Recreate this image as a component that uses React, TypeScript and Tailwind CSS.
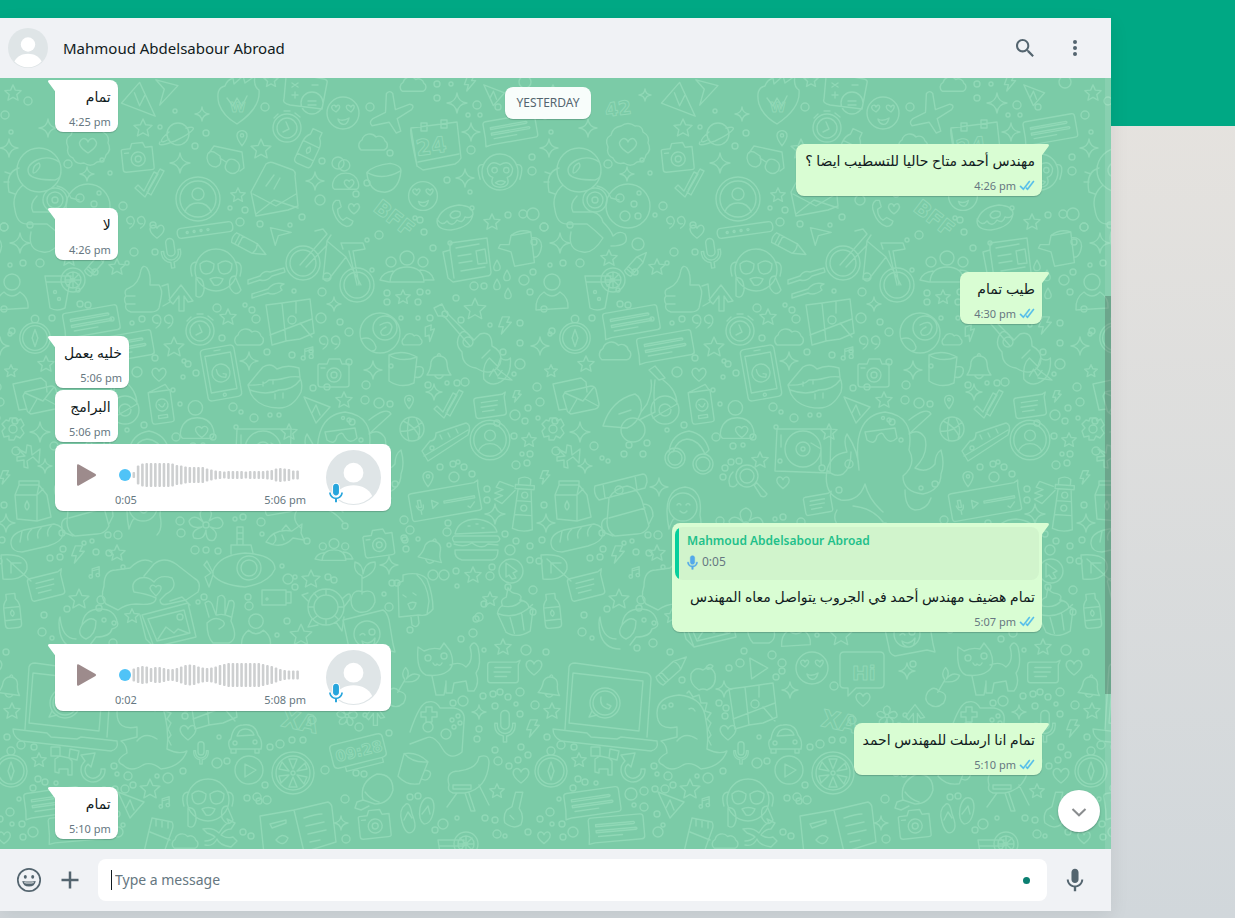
import React from "react";

/* ---------- wallpaper ---------- */

const c = (x: number, y: number, r: number) =>
  `M${x - r} ${y}a${r} ${r} 0 1 0 ${2 * r} 0a${r} ${r} 0 1 0 ${-2 * r} 0`;

const shapes: Record<string, string> = {
  star: "M0-9L2.6-3.2 9-2.6 4.2 1.8 5.6 8 0 4.8-5.6 8-4.2 1.8-9-2.6-2.6-3.2Z",
  spark: "M0-10Q1-1 10 0Q1 1 0 10Q-1 1-10 0Q-1-1 0-10Z",
  heart: "M0 7C-8 1-9-3-7-6C-4-9-1-7 0-4C1-7 5-9 7-6C9-3 8 1 0 7Z",
  bolt: "M-3-9L5-9 2-3 7-3-4 10-2 2-7 2Z",
  drop: "M0-6C3-1 4 1 4 3A4 4 0 0 1-4 3C-4 1-3-1 0-6Z",
  pin: "M0 11C-7 2-7-1-6-4A6.500 6.500 0 0 1 6-4C7-1 7 2 0 11Z" + c(0, -2, 2),
  cloud: "M-12 7A6 6 0 0 1-11-3A8 8 0 0 1 3-6A6 6 0 0 1 12-2A5 5 0 0 1 11 7Z",
  note: "M-4 5V-6L6-9V2M-4-3L6-6" + c(-6, 5, 2.5) + c(4, 3, 2.5),
  quotes: "M-8 8C-3 5-2 0-4-3A4 4 0 1 0-6 3M4 8C9 5 10 0 8-3A4 4 0 1 0 6 3",
  smile: c(0, 0, 16) + "M-10-3C-14-7-8-10-7-6C-5-10 0-7-7-1ZM5-3C1-7 5-10 8-6C10-10 14-7 8-1ZM-5 6Q0 9 6 5Q4 13-1 11Q-4 10-5 6Z",
  plane: "M-4-24Q0-28 3-24L6-6 22-12Q28-11 24-6L8 4 12 18 7 20-1 8-20 12Q-24 8-19 4L-5-3Z",
  planet: c(0, 0, 11) + "M-9 5C-18 11-20 7-9-2M8-6C20-9 18-3-3 7Q-22 14-18 8",
  watch: c(0, 0, 14) + c(0, 0, 10) + "M-1-6L2 1-4 4M-9-14L-13-10M8-15L13-11M-3-17H3",
  bottle: "M-5-12V-18H5V-12Q9-8 9-2V16Q9 20 5 20H-5Q-9 20-9 16V-2Q-9-8-5-12ZM-9-3H9M-9 11H9M0 0Q4 4 0 7Q-4 4 0 0",
  lace: "M-7-20Q0-25 7-20Q14-21 15-14Q22-10 20-3Q24 4 18 9Q17 16 9 16Q3 22-4 17Q-12 19-15 12Q-22 9-20 1Q-24-7-17-11Q-15-19-7-20ZM0 7C-9 1-10-3-7-6C-4-9-1-7 0-4C1-7 5-9 7-6C10-3 9 1 0 7Z",
  camera: "M-15-9H-7L-5-14H6L8-9H15V12Q15 14 12 14H-13Q-16 14-16 11V-8Z" + c(0, 2, 7) + c(0, 2, 3) + "M-13-5H-9",
  glasses: "M-19-2Q-19-10-12-8L-6-4Q-3 5-10 7Q-18 7-19-2M0 4Q2-3 9 0Q16 4 12 11Q7 16 1 11Q-2 8 0 4M-6-2L0 2M-17-7L-12-14 16-8 18 8 14 11",
  envelope: "M-27 2L-12-26Q-8-29-4-27L15-20Q18-18 17-14L20 16 10 20-22 26ZM-25 4L-2 16 18 4M-22 24L-4 10 20 18M-12-4L-4-15M-4-1L2-12",
  letters: "M-20-14L8-20 13-16 14-6M-20-14L-14 12-6 11M-8-6L18-12Q22-12 23-8L26 6Q26 10 22 11L-2 16Q-6 14-6 12L-10-2ZM-8-5L10 3 21-11M-4 15L4 1M25 8L12 1",
  avatar: c(0, 0, 22) + c(0, 0, 18) + c(0, -5, 6) + "M-13 13Q-10 4 0 4Q10 4 13 13",
  ticks: "M-17 2L-14-1-8 5 2-14 6-12-7 11ZM-4 4L8-17 12-15-1 9-5 6",
  helmet: c(0, 0, 22) + "M20-8Q10-15-2-10Q-14-4-10 4Q-6 10 16 10 22 8 22 2M-6 2Q-6-5 0-7Q3-4-3 2Q-6 4-6 2M-16 15Q-28 25-24 40Q-22 54-12 54H8Q16 60 24 68Q14 84 4 82Q-12 80-8 62M18 16Q28 18 32 28L40 30M-2 26Q-10 34-6 42H14Q22 44 24 52Q32 60 34 66Q40 60 46 64Q52 76 32 76M-20-2Q-34 2-30 22L-24 24M-28 4L-34 2M-30 12L-35 12" + c(16, 30, 12) + c(16, 30, 8) + c(16, 30, 3),
  moon: c(0, 0, 22) + c(-8, -8, 4) + c(6, -2, 3) + c(-3, 10, 5) + c(10, 10, 3) + c(11, -13, 2),
  bar: "M-24-5H24Q28-5 28 0T24 5H-24Q-28 5-28 0T-24-5Z" + c(-18, 0, 1) + c(-11, 0, 1) + c(-4, 0, 1) + c(3, 0, 1),
  mic: "M-5-12A5 5 0 0 1 5-12V0A5 5 0 0 1-5 0ZM-9-2V1A9 9 0 0 0 9 1V-2H12V1A12 12 0 0 1 2 13V20H-2V13A12 12 0 0 1-12 1V-2Z",
  crayon: "M-20-6H6L20 0 6 6H-20Q-23 0-20-6ZM6-6Q9 0 6 6M-12-6V6M-16-6V6",
  paper: "M-12-8L14-2-2 2-6 14ZM-2 2L14-2",
  phone: "M-8-14Q-14-10-10 0Q-6 12 4 15Q10 15 11 9L4 5 0 8Q-6 4-6-4L-2-7-4-14Z",
  bike: c(0, 0, 17) + c(0, 0, 13) + c(54, 22, 17) + c(54, 22, 13) + "M-3 2L24-29 20-34 12-32M28-28L24-22 43-6 58 22M24-22L20 16H26L43-6M3 4L24-18M40-14L38-20H60L62-14 50-12 56 22M46-12L54 22" + c(24, 14, 4),
  calendar: "M-24-20L22-26 26 10Q24 14 20 16L-12 22-18 18ZM-24-20Q-26-18-18 18M-17 14L24 6M-14-25V-17H-8V-25ZM6-28V-20H12V-28Z",
  monkey: c(0, 0, 20) + "M-18-8Q-28-10-22 8M18-8Q28-10 22 8M-14-4Q-10-14 0-8Q10-14 14-4Q14 4 8 6Q12 16 0 17Q-12 16-8 6Q-14 4-14-4M-5 12Q0 8 6 11Q2 17-5 12" + c(-6, -2, 3) + c(7, -2, 3),
  donut: "M-18 4Q-14-10 4-12Q18-11 18-3Q16 10-4 13Q-18 13-18 4M-18 2Q-13 10-8 4Q-3 11 2 3Q8 7 10 0Q16 2 18-3M-5-2Q-2-8 5-5Q7 0 0 1Q-4 2-5-2",
  news: "M-17-17L20-22 24 12Q24 16 20 16L-14 22-19 18-24-8-17-10ZM-17-10L-13 18M-11-12L12-16M-9-4L4-6M-8 3L5 1M-6 11L18 7M9-9L18-11 20 3 11 4Z",
  can: "M-10-16L12-20 16 14-6 18-10 2-24-2-22-6-12-6ZM13-14Q24-14 24-4 22 8 16 8M-10-16Q0-24 12-20",
  people: c(0, -12, 7) + c(16, -8, 5) + c(-16, -8, 5) + "M-17 12Q-16-3 0-3T17 12ZM-14 1Q-24 2-27 10L-18 12M13 0Q24 0 27 10L18 10",
  user: c(0, -12, 8) + "M-16 16Q-17 4-8-2Q0 6 8-2Q17 4 16 14Z",
  chat: "M-27-10Q-27-13-24-13H25Q28-13 28-10V9Q28 12 25 12H-22L-28 13-27 4ZM-20-6H18Q20-5 18-4H-20ZM-20 0H20Q22 1 20 2H-20ZM-18 6H6",
  drink: "M-14-12H12L6 20Q-2 24-9 20ZM-13-6H11" + c(14, -8, 12) + c(14, -8, 8) + "M14-16V0M6-8H22M8-14L20-2M20-14L8-2" + c(-4, 4, 1.5) + c(0, 11, 1.5),
  thumb: "M-14-2Q-4-6-2-20Q0-26 4-22Q8-16 7-5H16Q20 0 18 8L16 18Q14 22 8 22H-12Q-19 20-17 14Q-20 9-17 6Q-20 0-14-2ZM-16 6H-8M-16 14H-8M19-4L25-6 27 12 20 16",
  hush: c(0, 0, 21) + "M-19-8Q-28-8-24 6M19-8Q28-8 24 6M-16-6Q-10-12-2-6Q-2 4-10 4Q-16 4-16-6M2-6Q10-12 16-6Q16 4 8 4Q2 4 2-6M-6 9Q0 6 7 9Q4 17-2 15ZM-20 8Q-12 6-12 20Q-14 30-20 26ZM19 6Q12 6 14 18Q20 28 25 20Z",
  uparrow: "M0-13L12 3 7 4 3-2V13H-2V-2L-8 6-12 2Z",
  wrench: "M-18 4L-6 0Q-2-6 4-4L18-8 19-4 6 0Q0 6-6 4L-18 8ZM-14 18L2 13Q8 5 18 8Q12 10 16 14Q8 20 2 17L-14 22Z",
  guitar: "M-34-34L-26-38-22-30 6-2 12-8Q24-12 24 4Q36 10 32 22Q24 36 8 26Q-6 24-6 10Q-14 2-8-8Q-4-14 2-6M-34-34L-30-26-24-26 2 4" + c(0, 0, 5) + "M14 16L22 8M28 26L44 38 30 36",
  compass: c(0, 0, 16) + c(0, 0, 13) + c(0, -20, 4) + "M0-9L3 0 0 9-3 0Z",
  map: "M-24-16L-8-18 6-20 20-22 24 12 10 18-4 20-18 24ZM-8-18L-4 20M6-20V-8M-20 14L22-2M10 2L22 16" + c(2, -1, 4),
  flower: c(0, 0, 20) + c(5, -5, 12) + "M0-8Q10-14 12-6Q10 4 2 2Q-2-2 6-6M-19 6Q-8 2-4 14Q-4 18-8 18",
  tablet: "M-13-26H13Q17-26 17-22V22Q17 26 13 26H-13Q-17 26-17 22V-22Q-17-26-13-26ZM-13-19H13V18H-13ZM-3-23H3" + c(0, 0, 9) + c(0, 22, 1.5) + "M-4-4Q-4 4 4 5L5 2 2 1",
  lips: "M-27 3Q-18-8-12-15Q-4-20 2-13Q12-18 24-14L25-4Q28 2 26 10Q18 26 4 26Q-16 26-24 12L-27 3Q-12 4-6-2Q4-2 10-4Q18-6 25-5M-25 8Q-8 14 4 8Q18 8 25-2M-12 0V4M-2-2V2M8 11V16M0 12V17",
  cup: "M-14-14Q0-20 14-12L11 14Q-2 20-14 12ZM-14-14Q-2-6 14-12M13-2Q22-4 20 4Q18 10 12 8",
  bell: "M-12 9Q-8 3-8-4Q-6-10 0-10Q7-10 8-3Q8 4 12 9ZM-4 10Q0 15 4 10M-2-10Q0-15 2-10",
  passport: "M-12-14L10-14V16Q10 18 7 18H-9Q-12 18-12 15ZM-12-14L6-20 9-14M-5 10H4V13H-5Z" + c(0, 0, 6) + "M-3-1Q0 5 3-1",
  love: c(-4, -18, 8) + "M-18 16Q-22 14-20 6Q-16-7-2-7T16 6Q18 14 14 16ZM3 15C-4 10-5 6-3 4C-1 2 2 3 3 5C4 2 8 2 9 4C11 6 10 10 3 15Z",
  record: "M-26-20L28-20 27 24-28 22Z" + c(0, 0, 18) + c(0, 0, 7) + c(0, 0, 2) + "M8-6L18 0V16" + c(19, 19, 3) + c(-23, 12, 2) + "M-22-14V-2",
  cone: "M-14-14L12-4-2 12ZM-6 2L-2-6 2 4",
  octopus: "M-26 30Q-34-24 0-28Q30-24 24 10Q32 24 18 36Q18 52 38 54Q56 50 56 34Q60 24 56 10Q50 14 50 24Q42 34 30 28Q44 14 40-2Q34-12 24-6L46-26Q42-34 24-20M-26 30Q-26 12-38-6Q-42 0-38 12Q-54 14-58 30Q-62 54-44 60Q-26 62-20 44Q-16 60-2 72M-58 30Q-50 38-42 34Q-34 28-34 12M-20-8L10-12 12-2Q4 6-2-6Q-4-8-8-4Q-10 6-18 0ZM-32 66Q-12 68-2 82M20 50Q20 68 30 70Q42 70 46 58M-48 70Q-54 80-44 88" + c(4, -20, 2) + c(-2, -22, 1.5) + c(16, 0, 2) + c(-46, 50, 3) + c(50, 44, 3) + c(36, 48, 2) + c(-36, 24, 4),
  ball: c(0, 0, 12) + "M-9-8Q2-4 8 9M-12 2Q0 4 10-7M-3-11Q-6 2-3 12M4-11Q10 0 6 10",
  shoe: "M-24 8L-16-2Q-10-2-10-10L20-20Q26-18 22-8L-18 18ZM-22 13L22-13M-6-8L-4-4M2-10L4-6M10-14L12-10",
  gear: c(0, 0, 4) + "M-3-11H3L4-8 8-10 11-4 8-1 11 4 7 9 3 7 1 11H-4L-4 7-9 8-11 2-8-1-11-5-7-9-4-8Z",
  scooter: c(14, 26, 12) + c(46, 6, 14) + c(46, 6, 6) + "M-16 22Q-8-4 16-10Q24-6 22 8Q18 20 8 24L-16 22ZM20 16L36 8Q34-10 36-24M30-34L36-38 46-26 40-24ZM44-24Q58-14 58 0L34 14M22 8L28 0Q34-14 32-24M0 10L12 6",
  arrows: "M-11-8L-3-4-2-12 2-11 3-2 11-8 10 6 4 0-2 4-1 11-5 10-5 3-12 4-12 0-4-1Z",
  headset: "M-20 4Q-18-14 0-17Q16-14 20 2L16 6Q10-8-2-9Q-12-8-16 4" + c(-14, 10, 10) + c(-14, 10, 7) + c(14, 16, 10) + c(14, 16, 7),
  voice: "M-35-12Q-35-14-32-14H32L36-16 35-10V12Q35 14 32 14H-32Q-35 14-35 11ZM-13-4L-7 0-13 4ZM-1-1H30V1H-1ZM-27-6V1H-24V-6ZM-29-1Q-28 4-25 4T-22-1M-25 4V8M22 8L24 10 29 5",
  lighthouse: "M-8 24L-5-16H8L12 24Q2 28-8 24ZM-8-16H11V-20H-8ZM-5-20V-26Q2-30 7-26V-20M-6-4H9M-7 10H10M-10-18L-24-22-27-16-20-14-28-10-20-8-28-4-20 0-8-14" + c(2, -10, 3) + c(2, 3, 3),
  milk: "M-18-6L-14-16V-20H6V-16L-14-16M6-16L14-6 18 16 4 20-16 18-18-6H4L6-16M4-6V20M4-6L10-12M-6 0Q-2 6-6 9Q-10 6-6 0",
  pack: "M-16-2Q-10-12 2-14Q14-12 18 4L24 26Q20 34 12 34L-10 36Q-18 32-18 22ZM-30-14L18-26Q22-26 22-18L20-12-26 0Q-32-6-30-14ZM-22-16L-20-2M10-24L12-10M-16 18L20 8M18 4Q28 4 28 16L24 24M-18 18Q-26 20-22 32L-12 36" + c(-6, -10, 4),
  lens: c(4, -2, 11) + c(4, -2, 7) + "M11 7L14 5 24 16Q22 20 18 18ZM-10-6Q-16 0-13 8Q-8 10-6 6" + c(-18, -10, 3) + c(-12, -16, 3) + c(-4, -17, 3) + c(-20, -1, 3),
  girl: c(0, 0, 14) + "M-14 22Q-22-18 2-20Q20-18 17 8Q20 22 14 28M-6-2Q-4-5-2-2M3-2Q5-5 7-2M-3 4Q1 8 4 4M-14 22Q-10 10-8 12",
  burger: "M-21-6Q-18-20 0-21Q18-19 21-8ZM-22-4H22Q26 0 21 2H-22Q-25-2-22-4ZM-22 4Q-12 8-4 3Q6 10 12 4L22 5M-21 10H22Q22 19 16 20H-14Q-22 18-21 10M-8-14H-6M0-16H2M6-12H8",
  bread: "M-25 6Q-26-4-12-8L18-14Q28-12 27-4Q26 4 12 8L-14 14Q-24 14-25 6M-16 4L-14-7M-8 2Q-10-4-4-9M2 0Q0-6 6-11M12-2Q10-8 16-13",
  cursor: c(0, 0, 12) + "M-5-8L6 0 2 2 5 7 1 8-2 4-5 6Z",
  leaf: "M-14-12Q14-14 12 2Q8 14-12 12ZM-8-8L16 14M-4 6V-4L6-4",
  msg: "M-17-8Q-17-11-14-11H15L19-13 17-8V9Q17 12 14 12H-14Q-17 12-17 9ZM-9-5H9M-10 0H8M-9 5H4",
  ice: "M-17-14L-12-16-12-22Q4-26 12-18Q18-2 18 12Q12 20 4 18L-16 20ZM2-22Q12-14 14 4L12 17M-4 20L-3 28Q2 32 4 26L3 18M-12-2L-9 0M-2-4L1-2M-7 7Q-3 4 1 6Q-1 14-5 12Z",
  cupcake: "M-18 2Q-16-4-12-5Q-14-12-7-13L-4-22Q-2-16 4-15Q10-12 6-8Q14-6 14 0L18 2 12 24Q-2 30-12 22ZM-18 2Q0 12 18-2M-13-5Q0 0 8-8M-6 8L-4 24M6 6V22",
  dog: "M-18 0Q-16-16 0-16Q14-16 17-4Q20 2 12 4Q10 12-4 12L-10 20M-18 0Q-24 10-14 14Q-4 10-4-4Q-10-10-18 0M-24 14Q-38 14-40-8Q-42-4-40 8Q-36 24-20 24" + c(4, -5, 2) + c(14, -2, 2),
  hands: "M-46 22Q-52 16-48 4Q-48-12-36-12L-22-14Q-10-26 0-20M-34 28Q-26 22-16 22Q4 24 4 16Q-4 12-18 10Q-22 0-12-4Q-4-6 2 0Q8-8 20-4Q26 6 14 12L8 18Q8 24 16 22L34 18 46 10Q50 0 42-4L24-18Q12-26 2-18L-8-6M4 14C-2 8-3 6-1 4C1 2 3 4 4 5C5 3 8 3 9 5C10 8 6 12 4 14ZM-46 22L-34 28",
  sub: "M-32 4Q-26-12 0-14Q30-12 30 2Q24 16 0 20Q-24 18-32 8ZM-14-13V-22H6L8-14M-8-22V-40H-2V-22M-32 6L-38-6-41-2-34 6-40 10-36 20-32 8M-8-34H-2M-8-28H-2" + c(4, 1, 12) + c(4, 1, 8),
  blossom: c(0, 0, 3) + "M-3-3Q-10-14 0-17Q9-14 3-4Q14-12 17-2Q16 6 4 2Q14 8 8 15Q0 18 0 5Q-2 16-12 13Q-16 6-4 2Q-16 4-17-4Q-12-12-3-3",
  fish: "M-18 6Q-10-8 8-5L18-12 17-3 20 4 9 2Q-2 14-18 6M-10-2Q-6 4-11 8M-2-1L0 4M-2-6L2-11 6-6",
  turtle: c(0, 0, 18) + c(0, 0, 12) + "M16-8Q26-18 24-8L18 0M-18-6L-24-12-18-14M-14 12L-18 20-8 18M10 15L16 24 18 10M0-12V-18M12 0H18M0 12V18M-12 0H-18M-8-9L-12-14M9 9L13 13M-9 9L-13 12",
  plant: "M-12 10Q-10-2 0 2Q12-2 12 12Q8 24-4 22Q-12 20-12 10ZM-1 4V-14Q-10-18-8-28Q0-26 0-16Q2-28 12-28Q14-18 0-12",
  usb: "M-14-7H10V8H-14ZM10-5H15V6H10" + c(-9, 2, 1),
  vhand: "M-12-2L-16-16Q-12-20-9-15L-5-4-3-22Q2-26 4-20V-4L8-18Q14-20 13-13L10 2Q18 20 8 24H-8Q-14 18-14 4M-14 4Q-6-4 2 2Q6 6-2 10M-4-4Q2-6 10-2",
  photo: "M-28-10L18-22 26 12-16 22ZM-22-6L14-15 20 8-13 16ZM-30-10L-24 14-16 22M0-24L12-28 20-20M-12 14L-4 2 4 8 8 4 18 8" + c(10, -8, 3),
  bubble: "M-26-18L14-28Q18-26 20-18L24 6 26 14 18 12-14 18Q-20 16-20 10Z" + c(-2, -4, 13) + "M-9-3Q-6-6-4-3M-7 3Q0 8 6 0Q6 10-1 9Q-6 8-7 3" + c(3, -6, 3),
  cat: "M-22-22L-16-18Q-8-22 0-20L4-26 10-18Q16-4 8 2Q0 8-14 6Q-24 2-22-22ZM10-4Q20-8 26-2Q34-8 30-22Q34-30 38-22Q42-4 36 4Q40 14 34 22H28L26 12 14 14 12 24H6V12M-8 7L-4 26H4L6 14M-7-6Q-5-2-3-5Q0-2 2-6" + c(-12, -11, 3) + c(4, -13, 3),
  laptop: "M-36-42Q-35-46-30-46L42-36Q46-34 46-30L42 28M-36-42L-40 20M-32-36L38-28 34 22-36 14ZM-52 20L-18 24-14 28 12 30 16 28 52 32Q54 40 46 42L-44 32Q-52 28-52 20Z" + c(0, -6, 15) + c(0, -6, 12) + "M-13 2L-16 8-8 6M-4-12Q-6-2 4 0L6-3 2-5",
  dino: "M-34-14Q-34-30-12-32Q10-30 14-12Q18 6 16 22Q28 28 36 24Q30 40 10 42Q0 34-8 38Q-20 46-28 38Q-38 34-24 26Q-24 18-30 14L-14 10-14 0Q-34 4-34-14M-4-34L-2-36 2-30 8-32 10-24 16-24 14-16 20-14 16-8 20-4 17 2 20 8 17 12 20 18M-14 14Q-6 4 6 12M-2-18Q2-20 4-16" + c(-27, -20, 2) + c(-20, -22, 2),
  apple: "M0-8Q8-14 12-4Q14 8 4 12Q0 10-4 12Q-14 6-12-4Q-8-12 0-8ZM2-9Q6-16 10-12Q8-8 4-9",
  car: "M-14 2Q-12-12-2-12Q10-14 13-2Q18 4 16 12H-15Q-18 4-14 2ZM-8-1Q-6-8 0-8Q7-8 9-2ZM-14 12V16H-9V12M10 12V16H14V12" + c(-10, 6, 2) + c(10, 5, 2),
  play: c(0, 0, 14) + "M-4-6L7 0-4 7Z",
  tri: "M-8-11L12 0-6 12Z",
  slice: c(0, 0, 21) + c(0, 0, 17) + c(0, 0, 2) + "M0-4L-4-14H4ZM4-2L12-10 14-4ZM4 2L14 4 11 11ZM0 4L4 14H-4ZM-4 2L-12 10-14 3ZM-4-2L-14-4-11-11Z",
  clock: "M-27-8Q-27-12-23-12H22Q27-12 27-8V8Q27 12 22 12H-22Q-27 12-27 8ZM-16 13V17H22V13",
  pad: "M-30 10Q-20-20-12-20Q-4-22 0-14H14Q26-12 24 0L22 30Q10 40 2 26Q-6 12-14 16L-30 22" + c(12, -2, 2) + c(18, -6, 2) + c(14, 5, 2) + c(20, 1, 2) + c(-12, 5, 5) + c(6, 12, 5) + "M-14-10V-15H-8V-10H-3V-5H-8V0H-14V-5H-19V-10Z",
  grill: "M-20 4Q-24-10-10-10Q8-12 10-24Q20-28 20-18Q18 8-4 12H-16Q-22 10-20 4ZM-12 12L-22 26M-4 12L2 30H6L0 12M10 4L20 24M-16 4H2V8H-16Z",
  ukulele: "M0-6L4-22H12L8-4Q14 4 10 14Q2 20-8 12Q-10 4-6-2ZM-2 4L2 8",
  blocks: "M-14-14H-5V-5H-14ZM5-12L14-10 12-1 4-3ZM-5-5L4-3 7 0 7 14 3 14V8H-6V12L-10 11V-2Z",
  redo: "M-8-8A12 12 0 1 0 12 0L8 0A8 8 0 1 1-5-5L-2-2 2-16-12-14Z",
  shuffle: "M-16-4Q-6-6 0 0Q6-10 10-10L8-14 16-10 12-4Q6-4 2 2Q8 6 14 4L18 8 12 14Q0 12-2 6Q-6 14-14 12M-16-4L-12 0Q-6 2-4 4Q-8 8-14 8",
  tube: "M-8-16L12-12Q14-8 12-4L2 24-16 18ZM-10-2L10 6M-4-14V-8M2-13V-7M8-12V-6",
  book: "M-38-10L-4-16 30-24Q34-22 34-18L38 16 6 26-34 28ZM-4-16L6 26M-28-2L-12-6V-3L-26 2ZM-22 14Q-16 6-10 12Q-14 22-22 14M6-8Q18-12 24-12M8 0L26-4M10 8L28 4M12 16L22 14",
  bulb: "M-10 12Q-14-6 4-14Q20-14 20 2Q16 16 2 16ZM-10 12L-16 14-18 20-12 22-4 18M-8 4Q-2 12 6 14",
  flops: "M-12-14Q-20-8-16 4Q-12 18-6 14Q0 10-6-4Q-8-16-12-14M-14 2L-10-6-6 0M8-20Q16-22 16-10Q14 6 6 6Q0 2 2-10Q4-18 8-20M4-4L10-12 12-4",
  bat: "M-16 10Q-18-12-8-20L4-8 8-20Q16-14 22-20Q24 8 4 16Q-8 20-16 10M-8 6L-2-4 4 6 10-2",
  flame: "M-18 4Q-22-12-12-14Q-10-20-4-22L-3-16 6-24 8-17 18-24Q16-14 22-10Q24 8 0 24Q-14 16-18 4M-10-2L-4 6 0-2 5 6 10-4",
  bowl: "M-18-4Q-10-12 8-14Q20-12 20-6Q18 16 2 18Q-16 18-18-4ZM-18-4Q0 6 20-6",
  calc: "M-22-18Q-22-22-18-22L16-16Q20-15 19-12L14 14-18 10Q-26 8-24 4ZM-16-12L-10-8M-10-12L-16-8M4-10H10M-16 0H-10M-13-3V3M0 6H8M0 10H8" + c(4, 8, 11),
  speech: "M-22-16Q-22-20-18-20H18Q22-20 22-16V12Q22 16 18 16H-6L-14 24-14 16H-18Q-22 16-22 12Z",
};

type Item = [string, number, number, number?, number?];

const items: Item[] = [
  ["cone", 137, 98, 1.3, 180], ["paper", 165, 92, 1, 120], ["flame", 237, 100], ["calc", 308, 95], ["smile", 343, 113],
  ["plane", 390, 115, 0.9], ["planet", 178, 134], ["watch", 287, 128], ["bottle", 310, 147, 1, 25], ["lace", 88, 146],
  ["camera", 138, 157, 1, -6], ["pin", 242, 137, 0.8], ["glasses", 226, 160], ["envelope", 278, 190], ["cloud", 373, 143],
  ["bowl", 383, 176, 0.9], ["avatar", 198, 199], ["ticks", 152, 186], ["helmet", 39, 170], ["moon", 88, 206], ["bar", 205, 230, 1, -8],
  ["mic", 171, 252, 0.8, -8], ["crayon", 250, 246, 0.9, 28], ["paper", 280, 234, 0.8], ["phone", 343, 213, 0.9], ["heart", 354, 209, 0.7],
  ["love", 347, 178, 0.7], ["bike", 303, 263], ["calendar", 435, 148], ["monkey", 500, 172, 0.9], ["smile", 423, 196, 0.9],
  ["donut", 455, 217], ["news", 467, 260], ["can", 520, 250, 0.9], ["people", 407, 270], ["chat", 510, 130, 0.95, -10],
  ["user", 12, 294], ["drink", 59, 288], ["thumb", 143, 290], ["hush", 216, 270], ["uparrow", 181, 298], ["wrench", 266, 276],
  ["guitar", 468, 342], ["bolt", 505, 325, 0.9], ["bolt", 430, 333, 0.8, -20], ["chat", 91, 322, 1, -10], ["chat", 125, 347, 1, -10],
  ["compass", 35, 338, 0.95], ["watch", 200, 331], ["quotes", 164, 320], ["quotes", 331, 341], ["map", 290, 321], ["flower", 380, 333],
  ["cloud", 249, 338], ["tablet", 221, 373, 1, -10], ["lips", 275, 382], ["camera", 334, 373], ["cup", 403, 369], ["bell", 439, 366],
  ["note", 308, 354, 0.8], ["crayon", 97, 263, 0.7, -48], ["quotes", 137, 221, 0.9], ["drop", 497, 265, 0.8], ["drop", 507, 275, 0.8],
  ["drop", 497, 284, 0.8], ["drop", 508, 293, 0.8], ["cloud", 75, 352, 1.1], ["cloud", 412, 340, 0.7],
  ["passport", 162, 405, 1, -8], ["love", 199, 424, 0.9], ["record", 263, 449], ["cone", 318, 411], ["octopus", 345, 440],
  ["ball", 412, 429], ["shoe", 446, 443], ["avatar", 490, 440, 0.9], ["msg", 490, 406, 0.9, -8], ["ticks", 451, 407], ["pin", 409, 401, 0.7],
  ["letters", 33, 398], ["gear", 13, 429], ["scooter", 79, 404], ["arrows", 29, 457], ["headset", 149, 448],
  ["voice", 445, 502, 1, -10], ["lighthouse", 522, 505, 1, 4], ["milk", 33, 501], ["pack", 85, 500], ["lens", 203, 478],
  ["msg", 278, 504, 0.8, -10], ["girl", 143, 507], ["burger", 476, 540], ["bread", 36, 538], ["bell", 432, 551, 1, 14], ["cursor", 511, 571],
  ["leaf", 15, 567], ["msg", 46, 586, 1, -14], ["ice", 415, 597], ["cupcake", 515, 609, 1, -8], ["bottle", 12, 610, 0.9, -6],
  ["dog", 100, 625], ["hands", 152, 582], ["sub", 245, 567], ["blossom", 206, 525], ["fish", 284, 536], ["people", 334, 552, 0.7],
  ["camera", 379, 543, 0.95, -8], ["turtle", 326, 607], ["plant", 363, 590], ["usb", 276, 597], ["vhand", 221, 619], ["photo", 170, 625],
  ["user", 256, 632, 0.9], ["bubble", 369, 638], ["cat", 440, 669], ["msg", 503, 672, 0.9], ["laptop", 65, 709], ["dino", 151, 727],
  ["crayon", 133, 669, 0.9, -42], ["apple", 163, 678], ["tri", 217, 668, 0.9], ["smile", 272, 668], ["speech", 322, 672],
  ["map", 213, 705], ["car", 245, 737], ["play", 249, 770], ["slice", 293, 773], ["clock", 358, 751, 1, -14],
  ["mic", 505, 725, 0.85], ["pad", 440, 722], ["cup", 413, 769, 0.9, 15], ["grill", 469, 781], ["ukulele", 512, 812, 0.9],
  ["compass", 11, 771], ["blocks", 65, 761], ["redo", 93, 769], ["chat", 52, 803, 1, -8], ["chat", 76, 829, 1, -5],
  ["hush", 208, 800], ["shuffle", 219, 833], ["tube", 160, 834], ["book", 298, 826], ["bulb", 373, 788], ["camera", 375, 824, 1, -6],
  ["flops", 418, 818], ["drink", 452, 852], ["cone", 132, 806], ["mic", 201, 752, 0.6], ["bat", 495, 372, 0.7],
  ["bell", 10, 686, 0.9, 8], ["plant", 400, 690, 0.8, 30], ["note", 95, 573, 0.7], ["note", 165, 803, 0.7], ["bolt", 78, 554, 0.9],
  ["bolt", 533, 728, 0.9], ["bolt", 545, 477, 0.7], ["bolt", 517, 396, 0.6], ["pin", 428, 478, 0.8],
  ["cloud", 185, 842, 0.9], ["cloud", 413, 85, 0.9], ["bolt", 470, 83, 0.8], ["cone", 495, 96, 0.8],
  ["heart", 157, 232, 0.9], ["heart", 159, 375, 0.9], ["heart", 243, 483, 0.8], ["heart", 188, 733, 1], ["heart", 534, 668, 1],
  ["heart", 521, 776, 1], ["heart", 4, 838, 0.8], ["heart", 323, 700, 0.9], ["uparrow", 375, 715, 0.8], ["blossom", 347, 716, 0.6],
  ["star", 13, 93, 0.9], ["star", 143, 128, 1], ["star", 261, 149, 1.1], ["star", 238, 195, 0.8], ["star", 271, 80, 0.8],
  ["star", 492, 222, 0.9], ["star", 69, 258, 0.9], ["star", 117, 267, 0.9], ["star", 475, 309, 1.2], ["star", 228, 317, 0.9],
  ["star", 174, 347, 1.1], ["star", 344, 400, 0.9], ["star", 403, 297, 0.8], ["star", 289, 432, 0.9], ["star", 529, 440, 0.8],
  ["star", 220, 460, 0.9], ["star", 117, 553, 0.9], ["star", 79, 599, 1.1], ["star", 132, 616, 0.8], ["star", 311, 579, 1],
  ["star", 301, 635, 1.2], ["star", 473, 575, 0.9], ["star", 490, 599, 0.8], ["star", 503, 647, 0.9], ["star", 12, 711, 0.9],
  ["star", 39, 760, 0.8], ["star", 150, 789, 1.1], ["star", 497, 791, 0.8], ["star", 551, 371, 0.7], ["star", 46, 364, 0.9],
  ["spark", 48, 128, 0.9], ["spark", 9, 148, 0.9], ["spark", 202, 114, 0.7], ["spark", 180, 163, 1], ["spark", 87, 174, 0.7],
  ["spark", 315, 181, 0.9], ["spark", 20, 243, 1], ["spark", 457, 103, 1], ["spark", 471, 132, 0.9], ["spark", 465, 178, 0.9],
  ["spark", 105, 95, 0.6], ["spark", 334, 304, 0.7], ["spark", 249, 361, 0.9], ["spark", 373, 370, 0.9], ["spark", 434, 392, 0.8],
  ["spark", 40, 432, 1], ["spark", 45, 466, 0.7], ["spark", 119, 487, 0.9], ["spark", 6, 523, 0.9], ["spark", 495, 514, 1],
  ["spark", 389, 565, 0.9], ["spark", 540, 346, 0.9], ["spark", 184, 689, 0.8], ["spark", 250, 690, 0.8], ["spark", 367, 671, 0.8],
  ["spark", 479, 712, 0.7], ["spark", 341, 823, 0.7],
];

const dots: number[][] = [
  [28, 101, 4], [5, 115, 4], [68, 164, 4], [195, 146, 3], [206, 133, 3], [265, 107, 4], [370, 107, 4], [390, 153, 3], [338, 163, 6],
  [322, 161, 3], [320, 200, 5], [356, 194, 3], [367, 183, 3], [153, 225, 3], [240, 222, 4], [260, 224, 3], [134, 252, 4], [155, 252, 3],
  [123, 206, 4], [115, 215, 2], [175, 111, 2], [160, 127, 2], [102, 160, 2], [110, 173, 2], [230, 208, 2], [245, 210, 3], [379, 235, 4],
  [367, 240, 2], [302, 217, 3], [290, 225, 2], [4, 227, 4], [30, 225, 3], [437, 84, 3], [451, 84, 2], [477, 105, 4], [437, 98, 3],
  [468, 115, 2], [480, 115, 2], [498, 107, 3], [525, 82, 6], [551, 132, 2], [471, 150, 4], [532, 157, 3], [532, 171, 4], [447, 180, 3],
  [470, 192, 2], [472, 208, 2], [523, 214, 4], [508, 215, 3], [533, 214, 6], [544, 227, 4], [424, 232, 3], [415, 218, 2], [420, 220, 3],
  [433, 248, 3], [450, 243, 2], [484, 286, 3], [474, 286, 4], [456, 298, 3], [420, 292, 3], [428, 292, 2], [530, 292, 3], [524, 280, 5],
  [533, 272, 3], [40, 263, 4], [23, 263, 3], [10, 265, 2], [534, 242, 3], [98, 244, 6], [127, 263, 2], [95, 272, 3], [78, 290, 2],
  [52, 318, 3], [80, 304, 3], [88, 305, 3], [112, 319, 2], [142, 319, 3], [132, 323, 2], [217, 308, 4], [222, 338, 3], [256, 319, 4],
  [245, 305, 2], [252, 310, 3], [294, 291, 2], [322, 292, 4], [321, 318, 5], [340, 322, 3], [349, 332, 4], [387, 293, 3], [372, 270, 2],
  [418, 302, 3], [430, 318, 3], [418, 318, 2], [401, 318, 2], [387, 302, 3], [461, 320, 3], [445, 314, 3], [520, 323, 3], [520, 343, 3],
  [490, 325, 2], [12, 331, 3], [4, 309, 3], [10, 334, 2], [520, 364, 5], [503, 352, 3], [137, 372, 5], [155, 358, 3], [188, 364, 3],
  [196, 373, 3], [183, 377, 2], [184, 361, 2], [173, 390, 2], [267, 352, 3], [292, 355, 3], [311, 351, 2], [313, 388, 3], [327, 387, 3],
  [366, 385, 4], [379, 403, 5], [390, 404, 3], [365, 400, 4], [352, 422, 3], [349, 362, 3], [391, 366, 2], [447, 383, 2], [457, 383, 3],
  [465, 382, 4], [428, 385, 3], [514, 374, 2], [537, 387, 4], [540, 402, 4], [528, 408, 3], [515, 415, 5], [525, 421, 3], [538, 418, 2],
  [233, 407, 4], [241, 412, 2], [254, 418, 4], [270, 415, 2], [279, 415, 2], [236, 427, 2], [180, 404, 2], [144, 425, 3], [127, 430, 2],
  [176, 437, 4], [203, 445, 2], [193, 446, 3], [213, 437, 3], [497, 423, 3], [514, 436, 3], [555, 421, 3], [16, 451, 4], [54, 446, 4],
  [62, 458, 2], [68, 461, 2], [84, 454, 3], [103, 454, 3], [89, 445, 3], [107, 443, 3], [530, 454, 3], [522, 454, 2], [516, 465, 4],
  [527, 463, 3], [453, 464, 3], [440, 467, 3], [458, 462, 2], [454, 477, 5], [464, 467, 3], [472, 474, 3], [432, 448, 2], [4, 505, 3],
  [487, 489, 3], [487, 500, 3], [404, 520, 4], [410, 530, 4], [405, 540, 3], [406, 549, 3], [418, 539, 2], [448, 523, 3], [447, 532, 4],
  [505, 534, 3], [516, 541, 3], [510, 550, 5], [530, 546, 3], [539, 561, 3], [449, 545, 2], [2, 540, 3], [62, 533, 3], [63, 549, 3],
  [50, 558, 3], [60, 557, 3], [84, 543, 2], [92, 541, 2], [108, 535, 3], [118, 535, 4], [109, 553, 3], [96, 552, 3], [123, 567, 2],
  [181, 533, 4], [195, 550, 4], [206, 550, 3], [218, 551, 3], [180, 521, 4], [243, 517, 3], [235, 519, 2], [261, 522, 4], [262, 534, 2],
  [307, 541, 3], [282, 566, 2], [288, 579, 5], [295, 587, 3], [295, 577, 2], [328, 577, 3], [334, 580, 3], [248, 597, 3], [249, 606, 4],
  [204, 597, 3], [198, 602, 2], [287, 621, 3], [277, 635, 2], [345, 526, 3], [404, 538, 3], [389, 607, 4], [392, 583, 3], [384, 594, 2],
  [397, 583, 3], [433, 575, 5], [444, 575, 5], [456, 571, 3], [492, 567, 3], [490, 576, 4], [508, 587, 3], [457, 586, 2], [479, 617, 4],
  [484, 604, 3], [476, 619, 3], [473, 633, 4], [461, 639, 3], [530, 560, 3], [533, 590, 4], [533, 612, 3], [42, 632, 4], [52, 638, 2],
  [44, 615, 3], [67, 609, 3], [99, 608, 3], [101, 600, 4], [97, 648, 3], [113, 643, 4], [526, 650, 5], [484, 650, 2], [6, 652, 3],
  [483, 696, 3], [493, 694, 3], [500, 692, 3], [508, 697, 3], [520, 692, 4], [516, 704, 2], [463, 701, 5], [453, 703, 3], [495, 706, 3],
  [479, 729, 3], [477, 739, 3], [495, 750, 3], [498, 761, 4], [509, 766, 3], [518, 760, 3], [528, 755, 3], [521, 747, 3], [520, 714, 3],
  [535, 705, 4], [7, 737, 3], [21, 745, 4], [34, 747, 3], [114, 766, 3], [128, 776, 4], [117, 774, 2], [38, 779, 3], [45, 782, 3],
  [56, 783, 2], [33, 788, 3], [19, 799, 2], [10, 812, 4], [33, 832, 5], [22, 824, 3], [23, 837, 3], [12, 824, 2], [91, 794, 6],
  [104, 791, 4], [104, 807, 4], [94, 805, 2], [115, 789, 3], [125, 789, 4], [133, 785, 3], [117, 814, 3], [118, 832, 5], [123, 825, 2],
  [157, 776, 2], [168, 778, 5], [183, 771, 3], [217, 763, 5], [227, 761, 3], [219, 737, 2], [130, 652, 3], [142, 680, 3], [179, 703, 3],
  [186, 708, 3], [185, 716, 3], [189, 668, 3], [200, 663, 4], [204, 651, 3], [232, 655, 4], [242, 671, 3], [242, 663, 4], [236, 677, 3],
  [294, 686, 4], [270, 747, 3], [280, 744, 4], [292, 740, 3], [303, 740, 3], [359, 727, 4], [312, 720, 4], [389, 733, 3], [325, 770, 4],
  [265, 785, 3], [257, 797, 4], [247, 798, 3], [259, 801, 3], [267, 800, 4], [243, 832, 3], [251, 836, 3], [346, 839, 4], [345, 799, 4],
  [356, 773, 3], [364, 774, 3], [365, 715, 2], [410, 797, 3], [418, 796, 3], [443, 824, 5], [435, 830, 3], [457, 818, 2], [485, 818, 3],
  [495, 820, 3], [497, 834, 4], [505, 836, 2], [528, 832, 3], [540, 819, 3], [410, 630, 3], [373, 664, 3],
];

const words: [string, number, number, number, number][] = [
  ["24", 417, 156, 22, -8], ["42", 66, 117, 19, -8], ["W", 230, 112, 14, 0], ["BFF", 372, 210, 21, 38], ["Hi", 312, 680, 20, 0],
  ["09:28", 337, 762, 15, -14], ["XA", 280, 726, 24, 12],
];

function Tile() {
  return (
    <g id="tile">
      {items.map(([name, x, y, s = 1, r = 0], i) => (
        <path key={i} d={shapes[name]} transform={`translate(${x} ${y}) rotate(${r}) scale(${s})`} vectorEffect="non-scaling-stroke" />
      ))}
      {dots.map(([x, y, r], i) => (
        <circle key={i} cx={x} cy={y} r={r} />
      ))}
      {words.map(([t, x, y, size, r]) => (
        <text key={t} x={x} y={y} fontSize={size} fontFamily="DejaVu Sans" fontWeight="bold" transform={`rotate(${r} ${x} ${y})`} strokeWidth="1">
          {t}
        </text>
      ))}
    </g>
  );
}

function Wallpaper() {
  return (
    <svg aria-hidden="true" className="absolute inset-0 h-full w-full" fill="none" stroke="#90d8b6" strokeWidth="1.4" strokeLinejoin="round" strokeLinecap="round">
      <g transform="translate(0 -78)">
        <Tile />
        <use href="#tile" x="-540" />
        <use href="#tile" x="540" />
        <use href="#tile" x="1080" />
      </g>
    </svg>
  );
}

/* ---------- icons ---------- */

const MIC =
  "M11.999,14.942c2.001,0,3.531-1.53,3.531-3.531V4.35c0-2.001-1.53-3.531-3.531-3.531S8.469,2.35,8.469,4.35v7.061C8.469,13.412,9.999,14.942,11.999,14.942z M18.237,11.412c0,3.531-2.942,6.002-6.237,6.002s-6.237-2.471-6.237-6.001H3.761c0,4.001,3.178,7.297,7.061,7.885v3.884h2.354v-3.884c3.884-0.588,7.061-3.884,7.061-7.884L18.237,11.412z";

const Ticks = () => (
  <svg viewBox="0 0 16 15" width="16" height="15" fill="#53bdeb" stroke="#53bdeb" strokeWidth="0.4" aria-label="Read">
    <path d="M15.01 3.316l-.478-.372a.365.365 0 0 0-.51.063L8.666 9.879a.32.32 0 0 1-.484.033l-.358-.325a.319.319 0 0 0-.484.032l-.378.483a.418.418 0 0 0 .036.541l1.32 1.266c.143.14.361.125.484-.033l6.272-8.048a.366.366 0 0 0-.064-.512zm-4.1 0l-.478-.372a.365.365 0 0 0-.51.063L4.566 9.879a.32.32 0 0 1-.484.033L1.891 7.769a.366.366 0 0 0-.515.006l-.423.433a.364.364 0 0 0 .006.514l3.258 3.185c.143.14.361.125.484-.033l6.272-8.048a.365.365 0 0 0-.063-.51z" />
  </svg>
);

function Avatar({ className }: { className: string }) {
  return (
    <svg viewBox="0 0 40 40" className={className} aria-hidden="true">
      <circle cx="20" cy="20" r="20" fill="#dfe5e7" />
      <circle cx="20" cy="16.500" r="7.200" fill="#fff" />
      <path d="M6.400 33.500C8.800 28.400 14 25.700 20 25.700s11.200 2.700 13.600 7.800A19.200 19.200 0 0 1 20 39.300 19.200 19.200 0 0 1 6.400 33.500z" fill="#fff" />
    </svg>
  );
}

/* ---------- messages ---------- */

type BubbleProps = { out?: boolean; tail?: boolean; children: React.ReactNode };

function Bubble({ out, tail, children }: BubbleProps) {
  return (
    <li className={`flex ${out ? "justify-end" : "justify-start"} ${tail ? "mt-3 first:mt-0" : "mt-0.5"}`}>
      <div
        className={`relative rounded-lg shadow-[0_1px_1px_rgba(11,20,26,0.2)] ${out ? "bg-[#d9fdd3]" : "bg-white"} ${
          tail ? (out ? "rounded-tr-none" : "rounded-tl-none") : ""
        }`}
      >
        {tail && (
          <svg viewBox="0 0 8 13" width="8" height="13" aria-hidden="true" className={`absolute top-0 ${out ? "-right-2 fill-[#d9fdd3]" : "-left-2 fill-white"}`}>
            <path d={out ? "M5.188,0H0v11.193l6.467-8.625C7.526,1.156,6.958,0,5.188,0z" : "M1.533,2.568L8,11.193V0L2.812,0C1.042,0,0.474,1.156,1.533,2.568z"} />
          </svg>
        )}
        {children}
      </div>
    </li>
  );
}

function Quote() {
  return (
    <div className="min-w-[370px] px-[3px] pt-1">
      <blockquote className="flex h-[53px] overflow-hidden rounded-lg bg-[#d1f4cc]">
        <span className="w-1 shrink-0 bg-[#06cf9c]" />
        <div className="pt-[3px] pl-2">
          <p className="text-[12px] leading-[22px] font-semibold text-[#1fc08a]">Mahmoud Abdelsabour Abroad</p>
          <p className="flex items-center gap-1 text-[12px] leading-5 text-[#667781]">
            <svg viewBox="3 0 18 24" width="11" height="15" fill="#53a9eb" aria-hidden="true">
              <path d={MIC} stroke="#53a9eb" strokeWidth="0.800" />
            </svg>
            0:05
          </p>
        </div>
      </blockquote>
    </div>
  );
}

function TextMessage({ out, tail = true, text, time, quote }: { out?: boolean; tail?: boolean; text: string; time: string; quote?: boolean }) {
  return (
    <Bubble out={out} tail={tail}>
      {quote && <Quote />}
      <div className="pt-1.5 pr-[7px] pb-[3px] pl-[9px]">
        <p dir="rtl" className="text-[14px] leading-[22px] whitespace-nowrap text-[#111b21]">
          {text}
        </p>
        <div className="mt-1.5 ml-[5px] flex justify-end gap-[3px] text-[11px] leading-[15px] whitespace-nowrap text-[#667781]">
          <time>{time}</time>
          {out && <Ticks />}
        </div>
      </div>
    </Bubble>
  );
}

function VoiceMessage({ tail, length, time, bars }: { tail?: boolean; length: string; time: string; bars: number[] }) {
  return (
    <Bubble tail={tail}>
      <div className="flex h-[67px] w-84 pr-2.5 pl-5">
        <button type="button" aria-label="Play voice message" className="mt-[19px] h-6 w-6 shrink-0">
          <svg viewBox="0 0 24 24" width="24" height="24" fill="#9d8b8c">
            <path d="M2 2.500Q2 0.600 3.800 1.400L20.500 11Q21.800 12 20.500 13L3.800 22.600Q2 23.400 2 21.500Z" />
          </svg>
        </button>
        <div className="ml-4 flex-1 pt-[18px]">
          <div className="relative h-[26px]">
            <svg width="186" height="26" aria-hidden="true">
              {bars.map((h, i) => (
                <rect key={i} x={17.5 + i * 4.31} y={13 - h / 2} width="2.600" height={h} rx="1" fill="#cdcfd0" />
              ))}
              <circle cx="10" cy="13" r="6" fill="#4fc3f7" />
            </svg>
            <input type="range" aria-label="Voice message position" defaultValue={0} className="absolute inset-x-0 top-0 h-6 opacity-0" />
          </div>
          <div className="mt-1 flex justify-between pr-5 text-[11px] leading-4 text-[#667781]">
            <span>{length}</span>
            <time>{time}</time>
          </div>
        </div>
        <div className="relative mt-1.5 h-[55px] w-[55px]">
          <Avatar className="h-full w-full" />
          <svg viewBox="0 0 24 24" width="20" height="20" className="absolute bottom-0.5 left-0" aria-hidden="true">
            <path d={MIC} fill="#27a5dc" stroke="#fff" strokeWidth="2" paintOrder="stroke" />
          </svg>
        </div>
      </div>
    </Bubble>
  );
}

const barsA = [6, 19, 23, 24, 24, 24, 24, 24, 24, 23, 20, 19, 17, 16, 16, 16, 16, 13, 11, 9, 8, 7, 8, 8, 8, 8, 7, 8, 8, 8, 8, 9, 10, 13, 14, 13, 12, 9, 9];
const barsB = [13, 16, 18, 17, 14, 16, 16, 14, 12, 12, 14, 17, 20, 21, 20, 17, 15, 14, 15, 17, 20, 22, 24, 24, 24, 24, 24, 24, 24, 24, 22, 20, 18, 15, 12, 10, 9, 9, 9];

export default function App() {
  return (
    <div className="relative flex h-screen flex-col bg-linear-to-b from-[#e8e4df] to-[#d1d7db] pt-[18px] pr-31 pb-[7px] font-['Noto_Sans','DejaVu_Sans',sans-serif]">
      <div className="absolute inset-x-0 top-0 h-[126px] bg-[#00a884]" />
      <main className="relative flex min-h-0 flex-1 flex-col bg-[#f0f2f5] shadow-[0_6px_18px_rgba(11,20,26,0.08)]">
        <header className="flex h-15 shrink-0 items-center px-2">
          <Avatar className="h-10 w-10" />
          <h1 className="ml-[15px] flex-1 text-[15px] leading-5 text-[#111b21]">Mahmoud Abdelsabour Abroad</h1>
          <div className="flex gap-[26px] pr-4">
            <button type="button" aria-label="Search" className="h-6 w-6">
              <svg viewBox="0 0 24 24" width="24" height="24" fill="#54656f">
                <path d="M15.9,14.3H15L14.7,14c1-1.1,1.6-2.7,1.6-4.3c0-3.7-3-6.7-6.7-6.7S3,6,3,9.7s3,6.7,6.7,6.7c1.6,0,3.2-0.6,4.3-1.6l0.3,0.3v0.8l5.1,5.1l1.5-1.5L15.9,14.3z M9.7,14.3c-2.6,0-4.6-2.1-4.6-4.6s2.1-4.6,4.6-4.6s4.6,2.1,4.6,4.6S12.3,14.3,9.7,14.3z" />
              </svg>
            </button>
            <button type="button" aria-label="Menu" className="h-6 w-6">
              <svg viewBox="0 0 24 24" width="24" height="24" fill="#54656f">
                <circle cx="12" cy="6" r="2" />
                <circle cx="12" cy="12" r="2" />
                <circle cx="12" cy="18" r="2" />
              </svg>
            </button>
          </div>
        </header>

        <section className="relative min-h-0 flex-1 overflow-hidden bg-[#7bcba7]">
          <Wallpaper />
          <ol className="relative pt-0.5 pr-[69px] pl-[55px]">
            <TextMessage text="تمام" time="4:25 pm" />
            <TextMessage out text="مهندس أحمد متاح حاليا للتسطيب ايضا ؟" time="4:26 pm" />
            <TextMessage text="لا" time="4:26 pm" />
            <TextMessage out text="طيب تمام" time="4:30 pm" />
            <TextMessage text="خليه يعمل" time="5:06 pm" />
            <TextMessage tail={false} text="البرامج" time="5:06 pm" />
            <VoiceMessage length="0:05" time="5:06 pm" bars={barsA} />
            <TextMessage out quote text="تمام هضيف مهندس أحمد في الجروب يتواصل معاه المهندس" time="5:07 pm" />
            <VoiceMessage tail length="0:02" time="5:08 pm" bars={barsB} />
            <TextMessage out text="تمام انا ارسلت للمهندس احمد" time="5:10 pm" />
            <TextMessage text="تمام" time="5:10 pm" />
          </ol>
          <div className="absolute inset-x-0 top-[9px] flex justify-center pr-[15px]">
            <span className="rounded-lg bg-white/95 px-[11px] text-[12px] leading-8 text-[#54656f] shadow-[0_1px_1px_rgba(11,20,26,0.2)]">YESTERDAY</span>
          </div>
          <div className="absolute inset-y-0 right-0 w-1.5 bg-white/10">
            <div className="mt-[218px] h-[398px] bg-black/20" />
          </div>
          <button
            type="button"
            aria-label="Scroll to bottom"
            className="absolute right-[11px] bottom-[17px] flex h-[42px] w-[42px] items-center justify-center rounded-full bg-white shadow-[0_1px_2px_rgba(11,20,26,0.3)]"
          >
            <svg viewBox="0 0 20 20" width="20" height="20" fill="none" stroke="#8a8d8f" strokeWidth="2">
              <path d="M3.500 8L10 14.300 16.500 8" />
            </svg>
          </button>
        </section>

        <footer className="flex h-[62px] shrink-0 items-center pr-6 pl-4">
          <button type="button" aria-label="Emoji" className="h-[26px] w-[26px]">
            <svg viewBox="0 0 26 26" width="26" height="26" fill="#54656f">
              <circle cx="13" cy="13" r="11.200" fill="none" stroke="#54656f" strokeWidth="1.700" />
              <ellipse cx="9.300" cy="9.800" rx="1.500" ry="1.900" />
              <ellipse cx="16.700" cy="9.800" rx="1.500" ry="1.900" />
              <path fillRule="evenodd" d="M6.300 13.900Q13 15.300 19.700 13.900Q19 19.600 13 19.600T6.300 13.900zM8 16Q13 17 18 16L17.500 15.200Q13 15.900 8.500 15.200z" />
            </svg>
          </button>
          <button type="button" aria-label="Attach" className="ml-4 h-6 w-6">
            <svg viewBox="0 0 24 24" width="24" height="24" stroke="#54656f" strokeWidth="2.500">
              <path d="M12 3.500V20.500M3.500 12H20.500" />
            </svg>
          </button>
          <div className="ml-4 flex h-[42px] flex-1 items-center rounded-lg bg-white pr-[17px] pl-[13px]">
            <span className="h-5 w-px bg-[#111b21]" />
            <input
              type="text"
              aria-label="Type a message"
              placeholder="Type a message"
              className="ml-[3px] h-6 min-w-0 flex-1 bg-transparent text-[14px] leading-6 outline-none placeholder:text-[#667781]"
            />
            <span className="h-[7px] w-[7px] rounded-full bg-[#0b7f71]" />
          </div>
          <button type="button" aria-label="Record voice message" className="ml-4 h-6 w-6">
            <svg viewBox="0 0 24 24" width="24" height="24" fill="#54656f">
              <path d={MIC} />
            </svg>
          </button>
        </footer>
      </main>
    </div>
  );
}
